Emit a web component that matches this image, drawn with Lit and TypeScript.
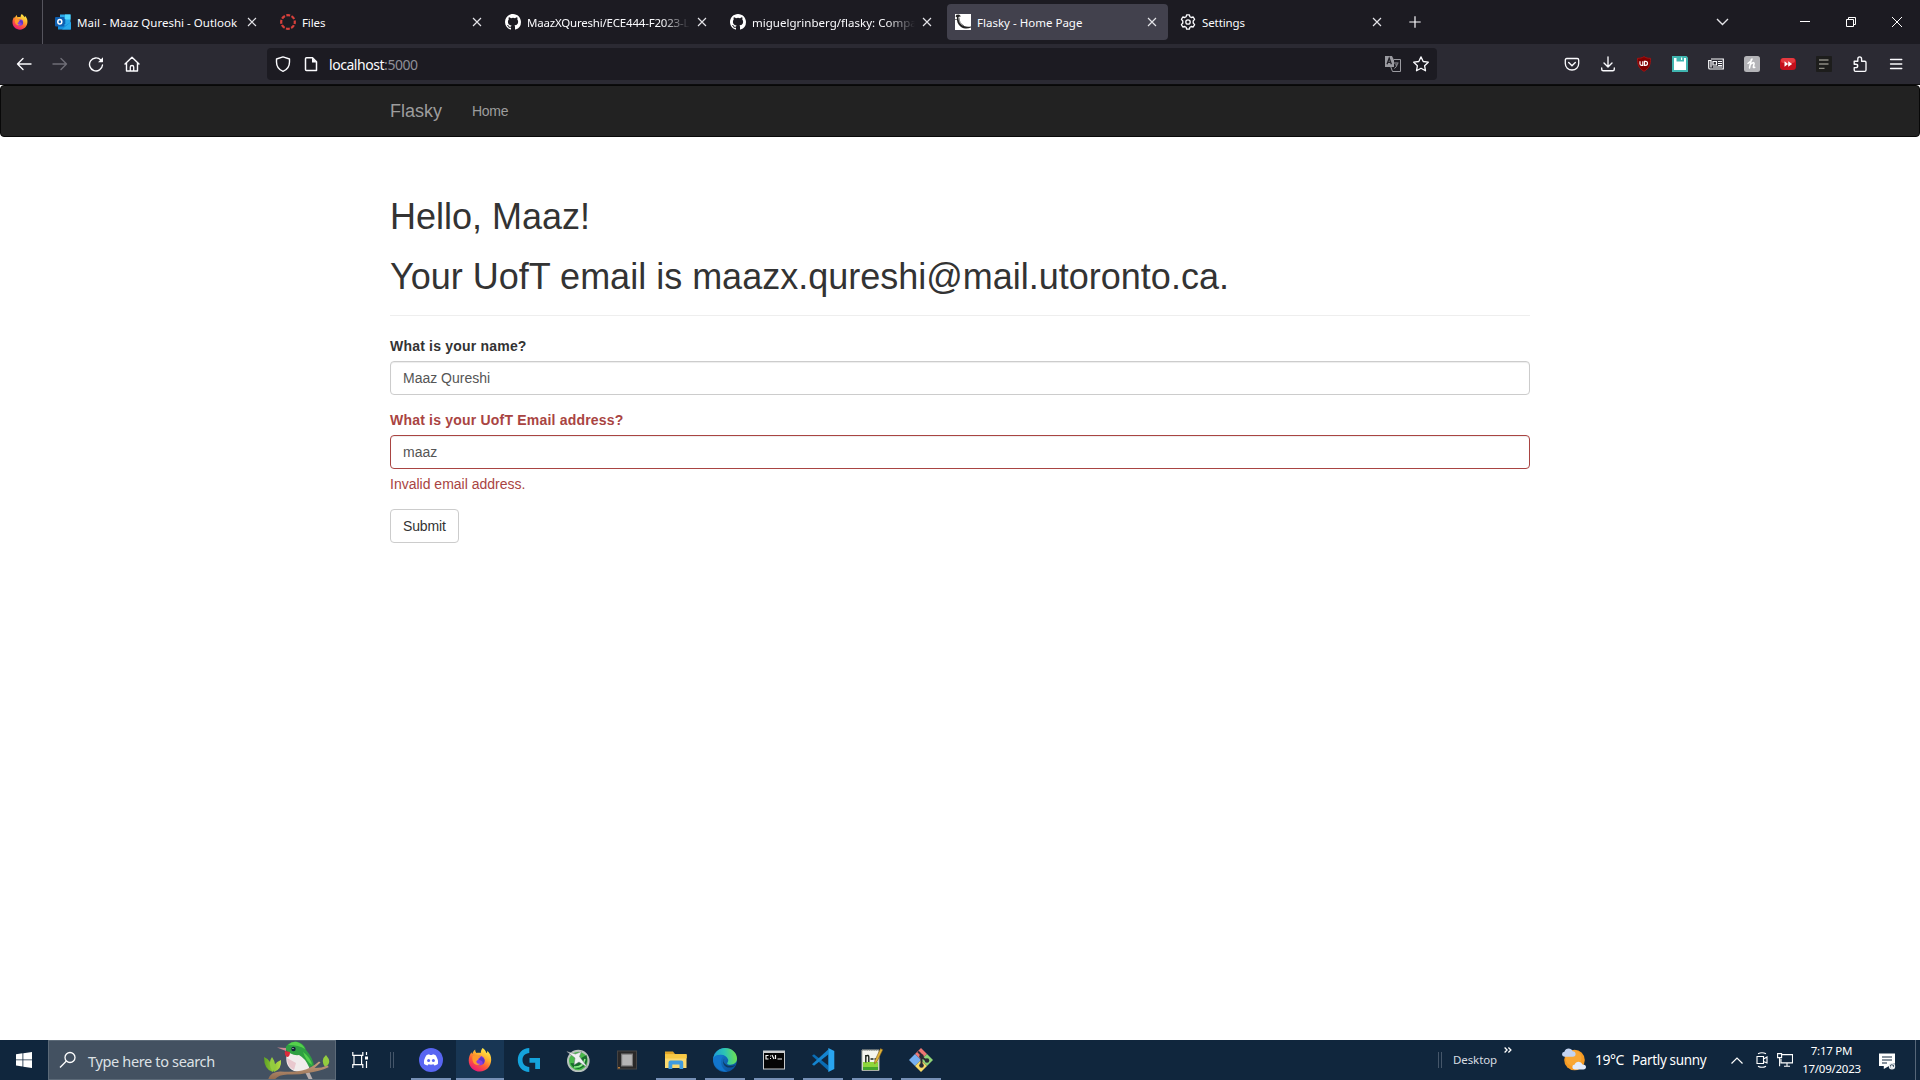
import { LitElement, html, css, svg, nothing } from "lit";
import { customElement, property } from "lit/decorators.js";
import { classMap } from "lit/directives/class-map.js";

const box = (w: number, h: number, body: unknown) =>
  html`<svg width=${w} height=${h} viewBox="0 0 ${w} ${h}" fill="none">${body}</svg>`;

const firefox = (size: number, id: string) => html`
  <svg width=${size} height=${size} viewBox="0 0 24 24">
    <defs>
      <linearGradient id=${id} x1=".8" y1=".05" x2=".25" y2="1">
        <stop offset="0" stop-color="#fff04a" /><stop offset=".35" stop-color="#ffb02e" />
        <stop offset=".62" stop-color="#ff5c38" /><stop offset="1" stop-color="#e8127c" />
      </linearGradient>
    </defs>
    <path fill="url(#${id})" d="M14.5 0c2.2 1.4 3.3 3 3.8 4.9.8.1 1.1-1 1-2.1 2.6 2.3 4 5.4 3.9 9.3C23 18.6 18.200 23.500 12 23.500S.7 18.700.7 12.400C.7 9 2 6 3.600 4.200c0 .8.2 1.300.6 1.800C5 4 6 2.300 7.200 1.500c-.1 1.500.4 2.700 1.300 3.500 1.300-.5 3-.5 4.200 0 .1-1.900.7-3.500 1.800-5z" />
    <circle cx="11.800" cy="12.600" r="4.900" fill="#8a3fe0" />
    <path fill="#ff9a2b" d="M4.500 8.200c2-1.500 4.300-1.400 5.600-.1l3 .2c-.4 1.500-2.400 1.500-2.800 2.800 0 1.500-1.600 1.300-2 2.400.2 1.800 2 2.700 3.900 2.200-1.600 2-5.500 1.500-7-1.500-.9-1.900-1-4-.7-6z" />
    <path fill="#5b37c4" d="M12 9.400c3-.5 4.700 1.500 4.600 3.600a4.800 4.800 0 0 1-2 3.600c.6-2.500-.2-3.800-3.600-4.500z" />
  </svg>`;

const icons: Record<string, unknown> = {
  outlook: box(16, 16, svg`<path d="M5 .5h10.500v13H5z" fill="#28a8ea"/><path d="M10 .5h5.500v5H10z" fill="#50d9ff"/><path d="M5 5h5.300v5H5z" fill="#0364b8"/><path d="M3 8.500 9.500 12 16 8v7.500H3z" fill="#1490df"/><path d="m16 8-9 7.500h8q1 0 1-1z" fill="#28a8ea"/><rect y="3" width="9.500" height="9.500" rx="1" fill="#0f5fb0"/><ellipse cx="4.800" cy="7.800" rx="2" ry="2.300" stroke="#fff" stroke-width="1.500"/>`),
  canvas: box(16, 16, svg`<circle cx="8" cy="8" r="6.800" stroke="#d8403b" stroke-width="2.200" stroke-dasharray="3.900 1.440" stroke-dashoffset="1.900"/>`),
  github: box(16, 16, svg`<path fill="#fff" d="M8 0C3.580 0 0 3.580 0 8c0 3.540 2.290 6.530 5.470 7.590.4.070.55-.17.55-.38 0-.19-.01-.82-.01-1.490-2.010.37-2.530-.49-2.690-.94-.09-.23-.48-.94-.82-1.130-.28-.15-.68-.52-.01-.53.63-.01 1.080.58 1.230.82.72 1.210 1.870.87 2.330.66.070-.52.28-.87.51-1.070-1.780-.2-3.640-.89-3.640-3.950 0-.87.31-1.590.82-2.150-.08-.2-.36-1.020.08-2.120 0 0 .67-.21 2.200.82a7.600 7.600 0 0 1 4 0c1.530-1.040 2.200-.82 2.200-.82.44 1.100.16 1.920.08 2.120.51.56.82 1.270.82 2.150 0 3.070-1.870 3.750-3.650 3.950.29.25.54.73.54 1.480 0 1.070-.01 1.930-.01 2.200 0 .21.15.46.55.38A8.010 8.010 0 0 0 16 8c0-4.420-3.580-8-8-8z"/>`),
  flasky: box(16, 16, svg`<path fill="#fff" d="M0 0h16v16H0z"/><path fill="#222" d="M.5 2.500 1.500.8 4 .6 6 2.200l-2.500.8c0 4 1.500 7.500 5.500 9 2.500 1 5 .9 7 .4v1.200c-3 1.400-7 1.400-10-.6C2.800 10.800 1.500 7 1.900 3.300z"/><path stroke="#777" d="M4 3.500q0 6 5 8.300M0 5.500h2"/>`),
  gear: box(16, 16, svg`<path stroke="#fbfbfe" stroke-width="1.300" stroke-linejoin="round" d="M6.700.8h2.600l.6 2 1.300.7 2-.5 1.400 2.400L13.200 7v2l1.400 1.600-1.400 2.400-2-.5-1.300.7-.6 2H6.700l-.6-2-1.300-.7-2 .5-1.400-2.400L2.800 9V7L1.400 5.400 2.800 3l2 .5 1.300-.7z"/><circle cx="8" cy="8" r="2.200" stroke="#fbfbfe" stroke-width="1.300"/>`),
  x: box(10, 10, svg`<path stroke="#e4e4e8" stroke-width="1.150" d="m1 1 8 8M9 1 1 9"/>`),
  plus: box(12, 12, svg`<path stroke="#fbfbfe" stroke-width="1.200" d="M6 .3v11.400M.3 6h11.400"/>`),
  chevron: box(13, 8, svg`<path stroke="#e4e4e8" stroke-width="1.400" d="m1 1 5.500 5.500L12 1"/>`),
  min: box(10, 10, svg`<path fill="#fff" d="M0 4h10v1H0z"/>`),
  restore: box(10, 10, svg`<path stroke="#fff" d="M.5 2.500h7v7h-7zM2.500 2.500v-2h7v7h-2"/>`),
  close: box(10, 10, svg`<path stroke="#fff" d="m0 0 10 10M10 0 0 10"/>`),
  back: box(16, 16, svg`<path stroke="#fbfbfe" stroke-width="1.400" stroke-linecap="round" stroke-linejoin="round" d="M15 8H1.500M7 2.500 1.500 8 7 13.500"/>`),
  forward: box(16, 16, svg`<path stroke="#6f6e77" stroke-width="1.400" stroke-linecap="round" stroke-linejoin="round" d="M1 8h13.500M9 2.500 14.500 8 9 13.500"/>`),
  reload: box(16, 16, svg`<path stroke="#fbfbfe" stroke-width="1.400" stroke-linecap="round" d="M12.800 4A6.500 6.500 0 1 0 14.500 9"/><path fill="#fbfbfe" d="M15 1.200v4.600q0 .4-.4.4H10z"/>`),
  home: box(16, 16, svg`<path stroke="#fbfbfe" stroke-width="1.400" stroke-linejoin="round" stroke-linecap="round" d="M1 8 8 1.200 15 8M2.500 7v8h11V7"/><path stroke="#fbfbfe" stroke-width="1.300" d="M6.300 15v-4q0-1.500 1.700-1.500T9.700 11v4"/>`),
  shield: box(16, 16, svg`<path stroke="#fbfbfe" stroke-width="1.400" stroke-linejoin="round" d="M8 .9 14.500 3v3c0 4.500-2 7.600-6.500 9.300C3.500 13.600 1.500 10.500 1.500 6V3z"/>`),
  page: box(16, 16, svg`<path stroke="#fbfbfe" stroke-width="1.500" stroke-linejoin="round" d="M3.500 1.800h6l4 4v8.700h-10q-1 0-1-1V2.800q0-1 1-1z"/><path fill="#fbfbfe" d="M9 1.500 14 6.500H9z"/>`),
  translate: box(16, 16, svg`<path fill="#9b9ba1" d="M0 0h7l2 4v7H0z"/><path stroke="#222128" stroke-width="1.300" d="m2 8.200 2.200-6 2.200 6M2.800 6.300h3"/><path stroke="#9b9ba1" stroke-width="1" d="M9 3.500h6.500v12H7.500L5.800 11M8.500 7h5M11 8v1.500M9.500 12.500q2.500-2 3-5"/>`),
  star: box(16, 16, svg`<path stroke="#fbfbfe" stroke-width="1.300" stroke-linejoin="round" d="m8 .9 2.200 4.600 5.100.7-3.700 3.500.9 5.100L8 12.300l-4.500 2.500.9-5.100L.7 6.200l5.100-.7z"/>`),
  pocket: box(16, 16, svg`<path stroke="#fbfbfe" stroke-width="1.300" stroke-linejoin="round" d="M2.800 2.500h10.400q1.500 0 1.500 1.500v3.500c0 4-3 6.500-6.700 6.500S1.300 11.500 1.300 7.500V4q0-1.500 1.500-1.500z"/><path stroke="#fbfbfe" stroke-width="1.400" stroke-linecap="round" d="M4.700 6.500 8 9.700l3.300-3.200"/>`),
  download: box(16, 16, svg`<path stroke="#fbfbfe" stroke-width="1.350" stroke-linecap="round" stroke-linejoin="round" d="M8 .8v10M4 7l4 4 4-4M1.700 12v1.200q0 1.500 1.500 1.500h9.600q1.500 0 1.500-1.500V12"/>`),
  ublock: box(16, 16, svg`<path fill="#800000" stroke="#a31212" d="M8 .6C10 2 12 2.300 14.500 2.300c0 6-1 10-6.500 13-5.500-3-6.500-7-6.500-13C4 2.300 6 2 8 .6z"/><path stroke="#fff" stroke-width="1.200" d="M4 5.200v2.600q0 1.500 1.300 1.500h1.500V5.200M8.500 5.300h1q2 0 2 2t-2 2h-1z"/>`),
  save: box(16, 16, svg`<path fill="#40b5b0" d="M0 0h14.500L16 1.500V16H0z"/><path fill="#fff" d="M2 2h2.500v3.500H12V2h2v12H2z"/><path fill="#fff" d="M9 1.500h1.200V4H9z"/>`),
  news: box(16, 16, svg`<path stroke="#fbfbfe" stroke-width="1.200" d="M3 3h12.300v10H2q-1.300 0-1.300-1.300V4.500h2.300v7"/><path stroke="#fbfbfe" stroke-width="1.200" d="M5 5.500h3.500V9H5zM10 5.500h4M10 7.500h4M10 9.500h4M5 11h9"/>`),
  honey: box(16, 16, svg`<rect width="16" height="16" rx="2.500" fill="#b4b4b8"/><path stroke="#fff" stroke-width="1.500" stroke-linecap="round" d="M7.300 3.500 5.500 12M4 7.300q4-2.500 4-4.200M6.300 8.500q3.500-3.300 3.800-.8L9.300 11q0 1 1.500.3"/>`),
  youtube: box(16, 16, svg`<rect y="2" width="16" height="12" rx="3.500" fill="#c4101c"/><rect x="1" y="2" width="14" height="5" rx="2.500" fill="#e43a40"/><path fill="#fff" d="m4.500 5.200 3.700 2.800-3.700 2.800zM8.200 5.200 12.200 8l-4 2.800z"/>`),
  lines: box(16, 16, svg`<rect width="16" height="16" rx="1" fill="#1d1d1c"/><path stroke="#8c8b83" stroke-width="1.300" d="M3 4h9.500M3 8h9.500M3 12.300h5.500"/>`),
  puzzle: box(16, 16, svg`<path stroke="#fbfbfe" stroke-width="1.350" stroke-linejoin="round" d="M2.200 5.200h3.600V3q0-2.200 1.900-2.200T9.600 3v2.200h3.200q1.200 0 1.200 1.200v7.700q0 1.200-1.200 1.200H3.400q-1.200 0-1.200-1.200v-2.500h1.600q1.900 0 1.900-1.700T3.800 8.200H2.200z"/>`),
  menu: box(16, 16, svg`<path stroke="#fbfbfe" stroke-width="1.300" stroke-linecap="round" d="M2.500 3.500h11.300M2.500 8h11.300M2.500 12.500h11.300"/>`),
  windows: box(16, 16, svg`<path fill="#fff" d="M0 2.200 6.500 1.300v6.200H0zM7.300 1.200 16 0v7.500H7.300zM0 8.300h6.500v6.200L0 13.600zM7.300 8.300H16V16l-8.700-1.200z"/>`),
  search: box(18, 18, svg`<circle cx="11" cy="6.500" r="5" stroke="#fff" stroke-width="1.300"/><path stroke="#fff" stroke-width="1.300" d="m7.400 10-6.400 6.500"/>`),
  bird: html`<svg width="66" height="40" viewBox="0 0 66 40">
    <defs>
      <linearGradient id="leaf" x1="0" x2="1"><stop offset="0" stop-color="#5fa524" /><stop offset="1" stop-color="#b5dc45" /></linearGradient>
      <linearGradient id="branch" x1="0" x2="0" y2="1"><stop offset="0" stop-color="#c9a283" /><stop offset="1" stop-color="#8f684c" /></linearGradient>
    </defs>
    <path fill="url(#leaf)" d="M0 17q8 3 9 15Q0 30 0 17zM17 20q1 9-7 12Q8 23 17 20z" />
    <path fill="#93cc3f" d="M9 32Q3 24 8 17q6 8 1 15zM62 15q7 8-1 12-5-7 1-12z" />
    <path fill="#f1ecec" d="M23 12q-3 15 7 19 8 2 15-2 2-8-6-17z" />
    <path fill="#e9c8ce" d="M23 18q0 9 7 12l2-7z" />
    <path fill="#2fa042" d="M21 9q2-7 11-7.500 8 1 10 8.500 7 8 8 16l-5 1q-4-9-10-12-8 1-14-6z" />
    <path fill="#55d04c" d="M24 5q4-4 9-3 6 2 8 7-6-4-17-4zM39 12q8 6 9 13-6-4-9-13z" />
    <path fill="#dc2a3a" d="m21 11 5 1q0 5-3 5-3-2-2-6z" />
    <path fill="#cf8893" d="m13 7.500 9 .5v3z" />
    <circle cx="29.500" cy="9" r="2.200" fill="#122438" /><circle cx="29" cy="8.500" r=".6" fill="#fff" />
    <path fill="#b9aead" d="m41 32 4-.5 4 8.500h-4z" />
    <path fill="url(#branch)" d="M4 40q2-8 12-8.500 14 1 22-1 9-2 17-9l1.500 1-6 5.500q7 0 13.500-2.500l.5 1.800q-9 4.200-21 5.700-9 2-20 1.500-10 .5-13 5.500z" />
  </svg>`,
  taskview: box(16, 16, svg`<path stroke="#fff" stroke-width="1.200" d="M.8 0v3.400h10V0M.8 16v-3.400h10V16M2 3.400v9.200M9.600 3.400v9.200M14.500 0v3M14.500 9v7"/><path fill="#fff" d="M13 4.500h3v3h-3z"/>`),
  discord: box(24, 24, svg`<circle cx="12" cy="12" r="12" fill="#5865f2"/><path fill="#fff" d="M7.400 7.200q1.800-1 2.900-1l.4.8h2.600l.4-.8q1.100 0 2.900 1 3 4.300 2.300 8.800-1.800 1.400-3.500 1.600l-.9-1.300q-2.500.8-5 0l-.9 1.300q-1.700-.2-3.500-1.600-.7-4.500 2.300-8.800z"/><circle cx="9.600" cy="12.500" r="1.500" fill="#5865f2"/><circle cx="14.400" cy="12.500" r="1.500" fill="#5865f2"/>`),
  logitech: box(24, 24, svg`<path fill="#14a3dc" d="M12.300 0v5c-4 .3-6.800 3-6.800 7s2.800 6.700 6.800 7v5C5.500 23.800.8 19 .8 12S5.500.2 12.300 0zM12.500 10H23v11h-4.800v-6.300h-5.700z"/>`),
  swirl: box(24, 24, svg`<circle cx="12.300" cy="13" r="10.300" fill="#48b94a" stroke="#b8c2bd" stroke-width="2"/><path fill="#176d2c" d="M4.500 15q7 1 9-4l7-4q3 11-8 14-7-1-8-6z"/><path stroke="#8df08a" stroke-width="1.500" d="M8 19q9 1 11-8"/><path fill="#eef1f2" stroke="#6c7478" stroke-width=".5" d="M.8 3.500 9.500 6l6-2.500-2 5L22 20l-9-6-5 3 1-7z"/>`),
  chip: box(24, 24, svg`<path fill="#454343" d="M2 2.500h20v19H2z"/><path fill="#2a2828" d="M3 3.500h18v17H3z"/><path fill="#797777" d="M6 5.500h12v13H6z"/><path fill="#b6b4b4" d="M7.200 6.700h9.700v10.600H7.200z"/><path fill="#b3783a" d="M3 19h2v1.500H3z"/>`),
  folder: box(24, 24, svg`<path fill="#e2a526" d="M1 3.500h8l2 2.500h11.500v4H1z"/><path fill="#fcd96f" d="M1 6.500h21.500V20H1z"/><path fill="#f9c944" d="M1 6.500h21.500v4H1z"/><path fill="#3f9be0" d="M4.500 21v-6.500q0-2 2-2h10.700q2 0 2 2V21h-3.700v-4.500h-7.200V21z"/>`),
  edge: html`<svg width="24" height="24" viewBox="0 0 24 24">
    <defs>
      <linearGradient id="edgeTop" x1="0" y1=".5" x2="1" y2=".4"><stop offset="0" stop-color="#1d9bd8" /><stop offset=".5" stop-color="#2cc4b4" /><stop offset="1" stop-color="#71e24b" /></linearGradient>
      <linearGradient id="edgeLow" x1="0" y1="0" x2="1" y2="1"><stop offset="0" stop-color="#1684d6" /><stop offset="1" stop-color="#0a4a94" /></linearGradient>
    </defs>
    <circle cx="12" cy="12" r="12" fill="url(#edgeLow)" />
    <path fill="url(#edgeTop)" d="M.2 10.500C1.500 4 6.500 0 12 0c7 0 12 5 12 10.500 0 4-3 6.200-6.300 6.200-2.600 0-4-.8-3.500-1.800 1-1.200 1.200-2.200.9-3.300C14 8 10.500 6.500 7.500 6.700 4 6.800 1.300 8.300.2 10.500z" />
    <path fill="#1275cc" d="M8.800 10c-2 5 0 10.500 5.500 13.800C6.500 24 0 18 .2 10.500 2 6.500 8 6.200 11 8q-1.500.7-2.200 2z" />
    <path fill="#10263d" d="M11.500 10.500q-1.500 2-.5 4.200 3 4.800 11.500 2.200c-4 4.500-10.500 2.800-12-1-.8-2.200 0-4.500 1-5.400z" opacity=".65" />
  </svg>`,
  cmd: box(24, 24, svg`<path fill="#c9ccce" d="M1 2.500h22v19H1z"/><path fill="#050505" d="M2 5h20v15.500H2z"/><path stroke="#f4f4f4" stroke-width="1.200" d="M6.500 7.500H4V11h2.500M8 8h1M8 10.500h1M10 7l2 4M13.500 7v4M15.500 11h4.500"/>`),
  vscode: box(24, 24, svg`<path fill="#0a6cb3" d="M17.500 17.800 3 6.200 1 7.800l16.500 15z"/><path fill="#1484cf" d="M17.500 6.200 3 17.800 1 16.200l16.500-15z"/><path fill="#29a5f0" d="m17.300 0 6 2.900v18.200l-6 2.900z"/>`),
  notepad: box(24, 24, svg`<path fill="#f4f5ee" stroke="#a9afa5" d="M2 2h17v20.500H2z"/><path fill="#8ed63c" d="M3 14h15v8H3z"/><path fill="#42a52c" d="M3 19h15v3H3z"/><path stroke="#777" stroke-width="1.200" stroke-dasharray="1.300 1" d="M2 2h17"/><path stroke="#182018" stroke-width="1.400" d="M5.800 7v7.500M5.800 8q3-1.500 3 1v5M10.500 11h3M14.500 11h3"/><path fill="#e0b337" stroke="#78571c" stroke-width=".6" d="m20.500.5 2.300 1.300-6 12.200-2.300 1.700.3-3z"/>`),
  git: box(24, 24, svg`<path fill="#ee7772" d="m12 0 6 6-6 6-6-6z"/><path fill="#76aff0" d="m6 6 6 6-6 6-6-6z"/><path fill="#8fd477" d="m18 6 6 6-6 6-6-6z"/><path fill="#f7d967" d="m12 12 6 6-6 6-6-6z"/><path stroke="#292b35" stroke-width="2" d="m9 3.500 3.500 3.500v11M12.500 9l5 3.500"/><circle cx="12.500" cy="8.500" r="2.300" fill="#292b35"/><circle cx="12.500" cy="17.500" r="2.300" fill="#292b35"/><circle cx="18" cy="12.500" r="2.300" fill="#292b35"/>`),
  more: box(8, 6, svg`<path stroke="#fff" stroke-width="1.300" d="m.6.500 2.500 2.500L.6 5.500M4.400.5l2.500 2.500-2.500 2.500"/>`),
  weather: box(24, 24, svg`<circle cx="12.500" cy="12" r="10.300" fill="#f59a23"/><circle cx="11.500" cy="10" r="8" fill="#fbb040" opacity=".6"/><path fill="#c3d3f1" d="M2.500 8.700q-2.500-.3-2.500-2.500 0-2.400 2.400-2.500Q3.500.6 6.600.5q3 0 4 2.800 3 .2 3 2.800t-2.800 2.600z"/><path fill="#e2ebfb" d="M12.800 21.500q-2.500-.3-2.500-2.500 0-2.300 2.400-2.400 1-2.800 3.900-2.800t3.900 2.600q3.500-.1 3.500 2.600 0 2.400-2.700 2.500z"/>`),
  up: box(12, 7, svg`<path stroke="#fff" stroke-width="1.200" d="m.5 6.500 5.500-5.500 5.500 5.500"/>`),
  camera: box(12, 16, svg`<path stroke="#fff" stroke-width="1.100" d="M1 4.500h6.500v7H1zM7.500 7l3.500-2v6L7.500 9.500M2 1.800q4-2.200 8 0M2 14.200q4 2.200 8 0"/>`),
  network: box(16, 14, svg`<path stroke="#fff" stroke-width="1.100" d="M5 1.600h10.500v8.300H4V6M7 13.300h6M10 10v3.300M.6.600h4v4h-4zM2.600 4.600v8.700"/>`),
  notes: box(17, 17, svg`<path fill="#fff" d="M0 .5h16v10.200a4.300 4.300 0 0 0-6 2.300L4.800 16v-3H0z"/><path stroke="#10263d" stroke-width="1.200" d="M3 4h10M3 7h10M3 10h5"/><circle cx="13" cy="13.300" r="2.600" stroke="#e9edf0" stroke-width="1.200"/><path fill="#e9edf0" d="M14.500 9.500q-3 3 1.500 5.200-3.500 2-5-.7z"/>`),
};

/** Horizontal tab strip with window controls. */
@customElement("tab-strip")
class TabStrip extends LitElement {
  static styles = css`
    :host { display: flex; height: 44px; box-sizing: border-box; background: #1c1b22; font: 11.5px/16px "Noto Sans", "Open Sans", sans-serif; color: #fbfbfe; }
    svg { display: block; flex: none; }
    .pinned { width: 42px; display: flex; align-items: center; padding-left: 12px; box-sizing: border-box; }
    .rule { width: 1px; background: #55545d; margin-right: 2px; }
    .tab { width: 221px; height: 36px; margin: 4px 2px; box-sizing: border-box; padding: 0 11px 0 8px; display: flex; align-items: center; border-radius: 4px; }
    .active { background: #42414d; }
    .label { flex: 1; margin: 1px 3px 0 6px; overflow: hidden; white-space: nowrap; }
    .clipped { -webkit-mask-image: linear-gradient(to left, transparent 4px, #000 32px); mask-image: linear-gradient(to left, transparent 4px, #000 32px); }
    .plus { display: flex; align-items: center; padding-left: 14px; }
    .controls { margin-left: auto; display: flex; align-items: center; }
    .slot { width: 46px; display: flex; justify-content: center; }
    .list { margin-right: 53px; }
  `;
  tabs = [
    { icon: "outlook", title: "Mail - Maaz Qureshi - Outlook", ls: 0.01 },
    { icon: "canvas", title: "Files", ls: -0.1 },
    { icon: "github", title: "MaazXQureshi/ECE444-F2023-Lab", clipped: true, ls: -0.2 },
    { icon: "github", title: "miguelgrinberg/flasky: Compan", clipped: true, ls: 0.02 },
    { icon: "flasky", title: "Flasky - Home Page", active: true, ls: 0.01 },
    { icon: "gear", title: "Settings", ls: -0.1 },
  ];
  render() {
    return html`
      <div class="pinned">${firefox(16, "ffSmall")}</div><div class="rule"></div>
      ${this.tabs.map((t) => html`
        <div class=${classMap({ tab: true, active: !!t.active })}>
          ${icons[t.icon]}
          <span class=${classMap({ label: true, clipped: !!t.clipped })} style="letter-spacing:${t.ls}px">${t.title}</span>
          ${icons.x}
        </div>`)}
      <div class="plus">${icons.plus}</div>
      <div class="controls">
        <div class="list">${icons.chevron}</div>
        <div class="slot">${icons.min}</div><div class="slot">${icons.restore}</div><div class="slot">${icons.close}</div>
      </div>`;
  }
}

/** Navigation buttons, address field and extension buttons. */
@customElement("nav-toolbar")
class NavToolbar extends LitElement {
  static styles = css`
    :host { display: flex; align-items: center; height: 41px; box-sizing: border-box; padding-bottom: 1px; background: #2b2a33; border-bottom: 1px solid #0c0c0d; }
    svg { display: block; flex: none; }
    .nav { display: flex; gap: 20px; padding-left: 16px; width: 267px; box-sizing: border-box; }
    .url { width: 1170px; height: 32px; box-sizing: border-box; background: #1c1b22; border-radius: 4px; display: flex; align-items: center; padding: 0 8px; color: #fbfbfe; font: 14px/20px "Noto Sans", "Open Sans", sans-serif; }
    .url svg + svg { margin-left: 12px; }
    .address { flex: 1; margin: 2px 0 0 10px; letter-spacing: -0.45px; }
    .port { color: #8f8f98; }
    .actions { margin-left: auto; padding-right: 16px; display: flex; gap: 20px; }
  `;
  render() {
    return html`
      <div class="nav">${["back", "forward", "reload", "home"].map((n) => icons[n])}</div>
      <div class="url">${icons.shield}${icons.page}<span class="address">localhost<span class="port">:5000</span></span>${icons.translate}${icons.star}</div>
      <div class="actions">${["pocket", "download", "ublock", "save", "news", "honey", "youtube", "lines", "puzzle", "menu"].map((n) => icons[n])}</div>`;
  }
}

@customElement("form-field")
class FormField extends LitElement {
  @property() label = "";
  @property() value = "";
  @property() error = "";
  static styles = css`
    :host { display: block; margin-bottom: 15px; }
    .label { display: block; font-weight: 700; margin-bottom: 5px; letter-spacing: 0.2px; }
    .input { display: block; width: 100%; height: 34px; box-sizing: border-box; padding: 6px 12px; font: inherit; color: #555; background: #fff; border: 1px solid #ccc; border-radius: 4px; box-shadow: inset 0 1px 1px rgba(0, 0, 0, 0.075); outline: none; }
    .invalid .label, .help { color: #a94442; }
    .invalid .input { border-color: #a94442; }
    .help { margin: 5px 0 0; }
  `;
  render() {
    return html`<div class=${classMap({ invalid: !!this.error })}>
      <label class="label">${this.label}</label>
      <input class="input" .value=${this.value} />
      ${this.error ? html`<p class="help">${this.error}</p>` : nothing}
    </div>`;
  }
}

@customElement("flasky-page")
class FlaskyPage extends LitElement {
  static styles = css`
    :host { display: block; background: #fff; color: #333; font: 14px/20px "Liberation Sans", Arial, sans-serif; }
    .navbar { height: 52px; box-sizing: border-box; border: 1px solid #080808; border-radius: 4px; background: #222; margin-bottom: 20px; color: #9d9d9d; }
    .container { width: 1140px; margin: 0 auto; display: flow-root; }
    .links { display: flex; align-items: center; height: 50px; gap: 30px; }
    .brand { font-size: 18px; }
    .link { letter-spacing: -0.3px; }
    .header { margin: 40px 0 20px; padding-bottom: 9px; border-bottom: 1px solid #eee; }
    .title { margin: 0 0 20px; font-size: 36px; font-weight: 500; line-height: 39.6px; }
    .title:last-child { margin-bottom: 10px; }
    .submit { display: block; height: 34px; box-sizing: border-box; font: inherit; letter-spacing: -0.15px; color: #333; background: #fff; border: 1px solid #ccc; border-radius: 4px; padding: 6px 12px; }
  `;
  render() {
    return html`
      <div class="navbar"><div class="container links"><span class="brand">Flasky</span><span class="link">Home</span></div></div>
      <div class="container">
        <div class="header">
          <h1 class="title">Hello, Maaz!</h1>
          <h1 class="title">Your UofT email is maazx.qureshi@mail.utoronto.ca.</h1>
        </div>
        <form-field label="What is your name?" value="Maaz Qureshi"></form-field>
        <form-field label="What is your UofT Email address?" value="maaz" error="Invalid email address."></form-field>
        <button class="submit">Submit</button>
      </div>`;
  }
}

@customElement("task-bar")
class TaskBar extends LitElement {
  static styles = css`
    :host { display: flex; height: 40px; background: #10263d; color: #fff; font: 12px/16px "Noto Sans", "Open Sans", sans-serif; }
    svg { display: block; flex: none; }
    .start { width: 48px; display: flex; align-items: center; justify-content: center; }
    .search { width: 288px; box-sizing: border-box; border: 1px solid #5c6a78; background: #435161; display: flex; align-items: center; padding-left: 10px; font-size: 14.5px; line-height: 20px; color: #dde1e5; overflow: hidden; }
    .hint { width: 176px; margin-left: 11px; white-space: nowrap; letter-spacing: -0.35px; padding-top: 1px; }
    .view { width: 48px; display: flex; align-items: center; justify-content: center; }
    .grip { width: 2px; height: 16px; margin: 12px 0; border: solid #45566a; border-width: 0 1px; }
    .view + .grip { margin-left: 6px; }
    .apps { display: flex; margin-left: 13px; gap: 1px; }
    .app { width: 48px; display: flex; flex-direction: column; align-items: center; justify-content: flex-end; padding-top: 8px; box-sizing: border-box; }
    .app svg { margin-bottom: 6px; }
    .bar { width: 40px; height: 2px; background: #7690b6; }
    .idle { background: transparent; }
    .current { background: #183654; }
    .current .bar { width: 48px; }
    .spacer { flex: 1; }
    .desk { display: flex; width: 120px; padding-left: 11px; box-sizing: border-box; align-items: center; }
    .desk-label { width: 51px; font-size: 11.5px; color: #d8dde2; letter-spacing: -0.1px; }
    .more { align-self: flex-start; padding-top: 7px; }
    .weather { display: flex; align-items: center; font-size: 14px; width: 169px; white-space: nowrap; }
    .temp { width: 37px; margin-left: 9px; letter-spacing: -0.5px; }
    .sky { font-size: 13.5px; letter-spacing: -0.35px; }
    .tray { display: flex; align-items: center; margin-right: 9px; }
    .up { width: 25px; } .camera { width: 21px; }
    .clock { width: 77px; text-align: center; font-size: 11.5px; line-height: 18px; letter-spacing: -0.25px; }
    .notes { padding: 2px 0 0 9px; width: 27px; }
    .peek { width: 4px; border-left: 1px solid #566678; }
  `;
  apps = ["discord", "firefox", "logitech", "swirl", "chip", "folder", "edge", "cmd", "vscode", "notepad", "git"];
  idle = new Set(["logitech", "swirl", "chip"]);
  render() {
    return html`
      <div class="start">${icons.windows}</div>
      <div class="search">${icons.search}<span class="hint">Type here to search</span>${icons.bird}</div>
      <div class="view">${icons.taskview}</div>
      <div class="grip"></div>
      <div class="apps">${this.apps.map((a) => html`
        <div class=${classMap({ app: true, current: a === "firefox" })}>
          ${a === "firefox" ? firefox(24, "ffLarge") : icons[a]}
          <div class=${classMap({ bar: true, idle: this.idle.has(a) })}></div>
        </div>`)}</div>
      <div class="spacer"></div>
      <div class="grip"></div>
      <div class="desk"><span class="desk-label">Desktop</span><span class="more">${icons.more}</span></div>
      <div class="weather">${icons.weather}<span class="temp">19°C</span><span class="sky">Partly sunny</span></div>
      <div class="tray">
        <div class="up">${icons.up}</div><div class="camera">${icons.camera}</div><div>${icons.network}</div>
        <div class="clock">7:17 PM<br />17/09/2023</div>
        <div class="notes">${icons.notes}</div>
      </div>
      <div class="peek"></div>`;
  }
}

@customElement("app-root")
class AppRoot extends LitElement {
  static styles = css`
    :host { display: flex; flex-direction: column; width: 1920px; height: 1080px; overflow: hidden; background: #fff; }
    .page { flex: 1; min-height: 0; }
  `;
  render() {
    return html`<tab-strip></tab-strip><nav-toolbar></nav-toolbar><flasky-page class="page"></flasky-page><task-bar></task-bar>`;
  }
}
